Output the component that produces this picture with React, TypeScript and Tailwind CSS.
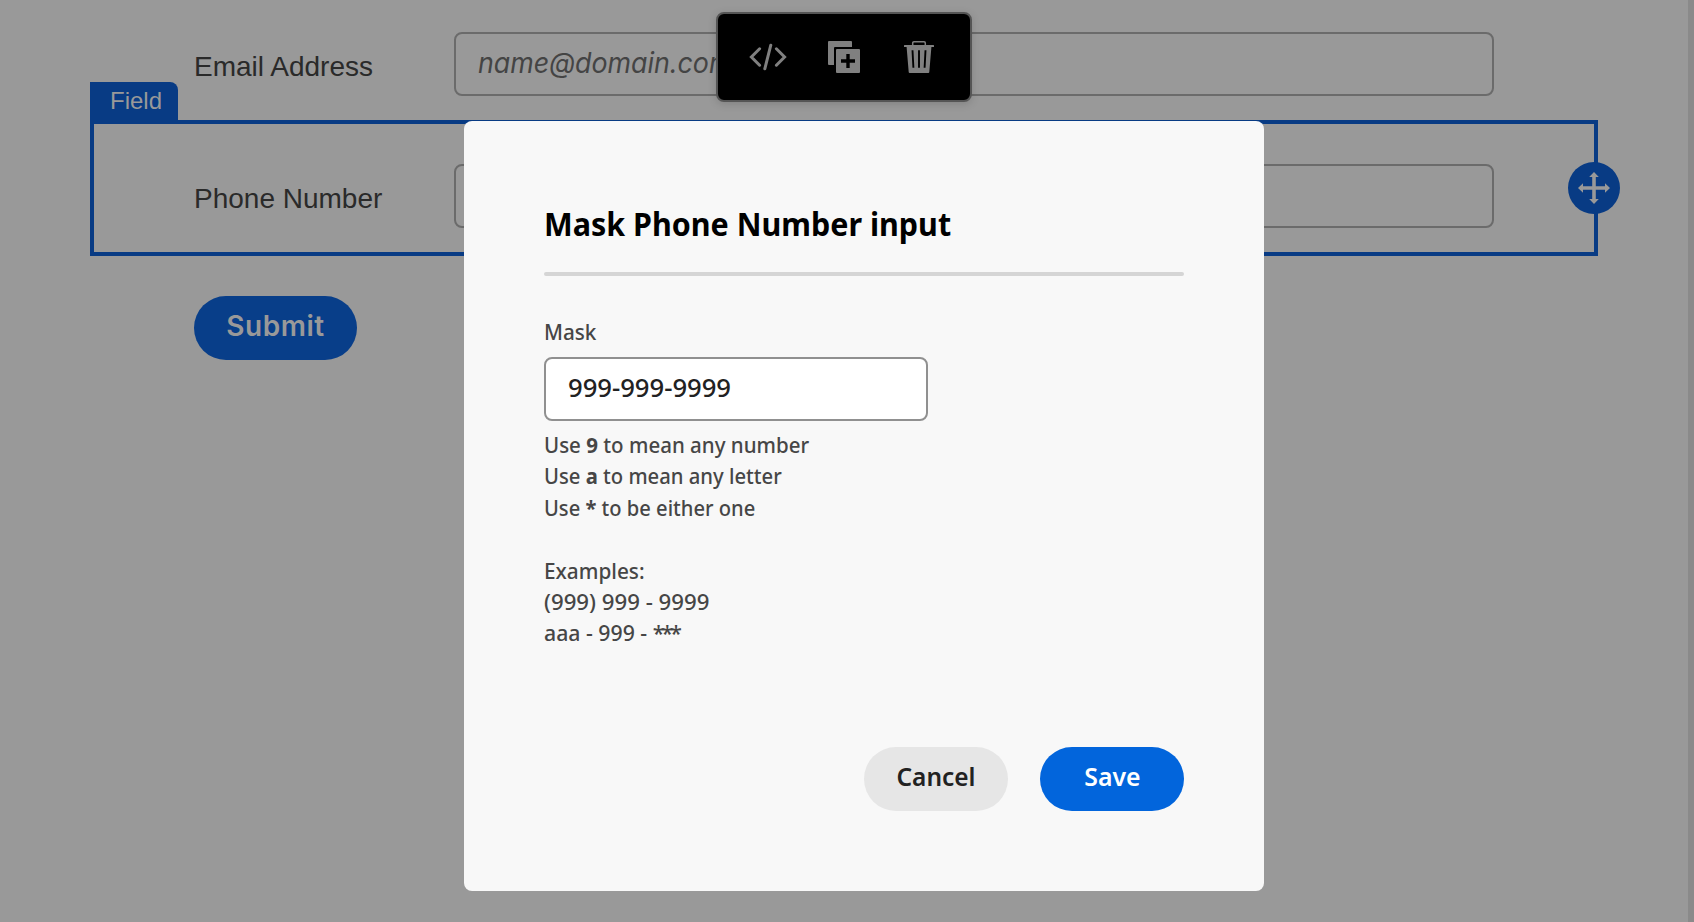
import type { ReactNode } from "react";

function CodeIcon() {
  return (
    <svg width="38" height="28" viewBox="0 0 38 28" fill="none" stroke="#808080" strokeWidth="3" strokeLinecap="round">
      <path d="M10.6 5.8 2.4 14l8.2 8.2M27.4 5.8l8.2 8.2-8.2 8.2M21.8 2.2 15.8 25.8" />
    </svg>
  );
}

function DuplicateIcon() {
  return (
    <svg width="32" height="32" viewBox="0 0 32 32">
      <path fill="#808080" d="M1 0h22a1 1 0 0 1 1 1v5H7a1 1 0 0 0-1 1v17H1a1 1 0 0 1-1-1V1a1 1 0 0 1 1-1Z" />
      <rect x="8" y="8" width="24" height="24" rx="1" fill="#808080" />
      <path d="M20 13v14M13 20h14" stroke="#000" strokeWidth="3.4" />
    </svg>
  );
}

function TrashIcon() {
  return (
    <svg width="30" height="32" viewBox="0 0 30 32">
      <path d="M8.7 4.5V2a1.2 1.2 0 0 1 1.2-1.2h10.2A1.2 1.2 0 0 1 21.3 2v2.5" fill="none" stroke="#808080" strokeWidth="1.5" />
      <path d="M.6 4h28.8a.6.6 0 0 1 .6.6V6H27.4L25.3 31a1 1 0 0 1-1 1H5.7a1 1 0 0 1-1-1L2.6 6H0V4.6A.6.6 0 0 1 .6 4Z" fill="#808080" />
      <path d="M8.5 9.3 9.4 26.7M15 9.3v17.4M21.5 9.3l-.9 17.4" stroke="#000" strokeWidth="1.9" />
    </svg>
  );
}

function MoveIcon() {
  return (
    <svg width="32" height="32" viewBox="0 0 32 32" fill="#999">
      <path d="M14.2 14.2V5H11.2L16 0l4.800 5h-3v9.200H27v-3l5 4.800-5 4.800v-3h-9.200V27h3L16 32l-4.800-5h3v-9.200H5v3L0 16l5-4.800v3Z" />
    </svg>
  );
}

function FormRow({ label, children }: { label: string; children?: ReactNode }) {
  return (
    <div className="flex h-16">
      <label className="w-[260px] shrink-0 text-[28px] leading-[69px] whitespace-nowrap text-[#2a2a2a]">{label}</label>
      <div className="h-16 w-[1040px] rounded-lg border-2 border-[#6b6b6b] pl-[22px]">{children}</div>
    </div>
  );
}

export default function App() {
  return (
    <main className="relative h-[922px] w-full overflow-hidden border-r-[6px] border-[#8a8a8a] bg-[#999] pt-8 font-['Liberation_Sans',sans-serif]">
      <div className="pl-[194px]">
        <FormRow label="Email Address">
          <span className="inline-block origin-left scale-x-[0.957] font-['Inter',sans-serif] text-[28px] leading-[59px] text-[#444] italic">
            name@domain.com
          </span>
        </FormRow>
      </div>

      <section className="relative mt-6 ml-[90px] h-[136px] w-[1508px] border-4 border-[#083b84] pt-10 pl-[100px]">
        <span className="absolute -top-[42px] -left-1 h-[42px] w-[88px] rounded-tr-lg bg-[#083b84] pl-5 text-[24px] leading-[37px] text-[#999]">
          Field
        </span>
        <FormRow label="Phone Number" />
        <button className="absolute top-[38px] -right-[26px] flex size-[52px] items-center justify-center rounded-full bg-[#083b84]">
          <MoveIcon />
        </button>
      </section>

      <button className="mt-10 ml-[194px] block h-16 w-[163px] rounded-full bg-[#083e89] pb-1 font-['Inter',sans-serif] text-[28px] leading-[60px] font-semibold tracking-[0.5px] text-[#999]">
        Submit
      </button>

      <div className="absolute top-3 left-[716px] flex h-[90px] w-[256px] items-start rounded-lg border-2 border-[#555] bg-black pl-[31px] shadow-[0_2px_8px_rgba(0,0,0,0.15)]">
        <div className="mt-[29px]"><CodeIcon /></div>
        <div className="mt-[27px] ml-[41px]"><DuplicateIcon /></div>
        <div className="mt-[27px] ml-11"><TrashIcon /></div>
      </div>

      <div className="absolute top-[121px] left-[464px] flex h-[770px] w-[800px] flex-col rounded-lg bg-[#f8f8f8] p-20 font-['Noto_Sans',sans-serif]">
        <h2 className="origin-left scale-x-[0.923] text-[33px] leading-[46px] font-bold whitespace-nowrap text-black">
          Mask Phone Number input
        </h2>
        <hr className="mt-[25px] h-1 shrink-0 rounded-full border-0 bg-[#d5d5d5]" />
        <label className="mt-10 origin-left scale-x-[0.940] text-[22px] leading-[30px] font-medium text-[#464646]">Mask</label>
        <div className="mt-[11px] h-16 w-[384px] shrink-0 rounded-lg border-2 border-[#909090] bg-white pl-[22px] text-[#222]">
          <span className="inline-block origin-left scale-x-[1.025] text-[25px] leading-[56px] font-medium">999-999-9999</span>
        </div>
        <div className="mt-2 flex flex-col text-[22px] leading-[31.4px] font-medium text-[#464646]">
          <p className="origin-left scale-x-[0.932]">Use <b>9</b> to mean any number</p>
          <p className="origin-left scale-x-[0.920]">Use <b>a</b> to mean any letter</p>
          <p className="origin-left scale-x-[0.915]">Use <b>*</b> to be either one</p>
          <p className="mt-[31.4px] origin-left scale-x-[0.944]">Examples:</p>
          <p className="origin-left scale-x-[1.010]">(999) 999 - 9999</p>
          <p className="origin-left scale-x-[0.966]">
            aaa - 999 - <span className="tracking-[-3px]">***</span>
          </p>
        </div>
        <div className="mt-auto flex justify-end gap-8 text-[26px] leading-[58px] font-semibold">
          <button className="h-16 w-36 rounded-full bg-[#e6e6e6] pb-1.5 text-[#222]">
            <span className="inline-block scale-x-[0.940]">Cancel</span>
          </button>
          <button className="h-16 w-36 rounded-full bg-[#0265dc] pb-1.5 text-white">
            <span className="inline-block scale-x-[0.955]">Save</span>
          </button>
        </div>
      </div>
    </main>
  );
}
